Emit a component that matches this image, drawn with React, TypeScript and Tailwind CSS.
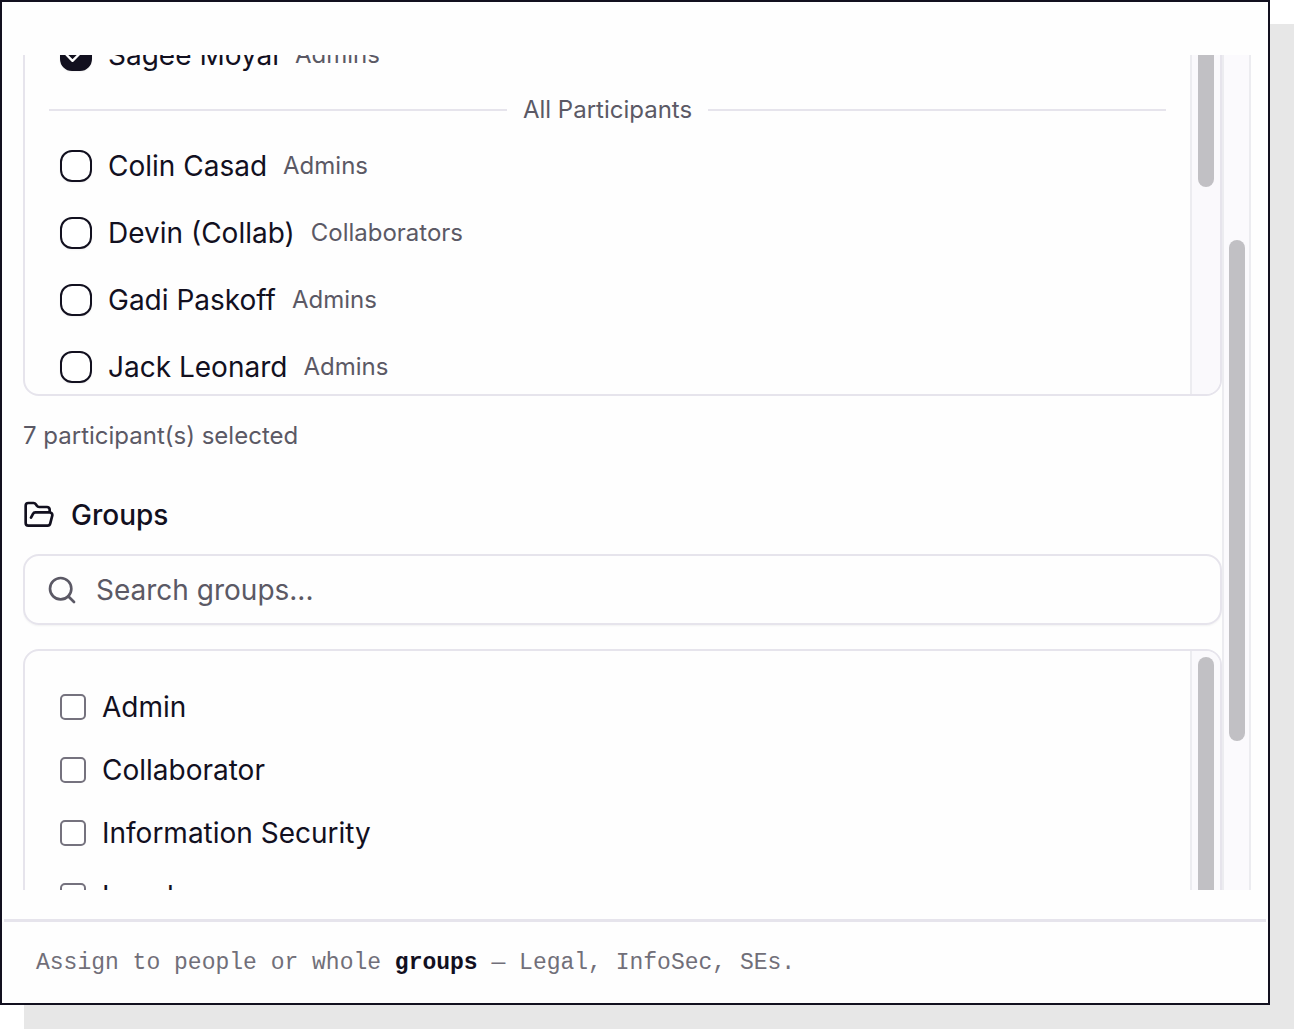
import React, { useState } from 'react';
import { Check, FolderOpen, Search } from 'lucide-react';

type Participant = {
  id: string;
  name: string;
  role: 'Admins' | 'Collaborators';
};

const selectedParticipants: Participant[] = [{ id: 'sagee', name: 'Sagee Moyal', role: 'Admins' }];

const allParticipants: Participant[] = [
  { id: 'colin', name: 'Colin Casad', role: 'Admins' },
  { id: 'devin', name: 'Devin (Collab)', role: 'Collaborators' },
  { id: 'gadi', name: 'Gadi Paskoff', role: 'Admins' },
  { id: 'jack', name: 'Jack Leonard', role: 'Admins' },
];

const groups = ['Admin', 'Collaborator', 'Information Security', 'Legal'];

const ParticipantRow: React.FC<{ participant: Participant; defaultChecked?: boolean }> = ({
  participant,
  defaultChecked = false,
}) => (
  <li className="flex h-[67px] shrink-0 items-center pl-[11px]">
    <span className="relative flex">
      <input
        id={participant.id}
        type="checkbox"
        defaultChecked={defaultChecked}
        className="peer size-8 appearance-none rounded-xl border-2 border-[#12101f] bg-white shadow-xs checked:bg-[#12101f]"
      />
      <Check className="pointer-events-none absolute inset-0.5 hidden size-7 text-white peer-checked:block" />
    </span>
    <label htmlFor={participant.id} className="flex items-center gap-4 pl-4 text-[28px] leading-10">
      {participant.name}
      <span className="text-2xl text-[#5b5965]">{participant.role}</span>
    </label>
  </li>
);

const App: React.FC = () => {
  const [query, setQuery] = useState('');
  const visibleGroups = groups.filter(g => g.toLowerCase().includes(query.toLowerCase()));

  return (
    <div className="bg-white pr-[25px] pb-[25px] font-['Inter',sans-serif] text-[#12101f]">
      <main className="border-2 border-[#12101f] bg-[#fefefe] shadow-[24px_24px_0_#e7e7e7]">
        <div className="mt-[53px] mr-[17px] ml-[21px] flex h-[835px] overflow-hidden">
          <div className="-mt-9 min-w-0 flex-1">
            <section className="flex h-[377px] overflow-hidden rounded-2xl border-2 border-[#e6e4ec]" aria-label="Participants">
              <div className="flex flex-1 flex-col overflow-hidden px-6">
                <ul>
                  {selectedParticipants.map(p => (
                    <ParticipantRow key={p.id} participant={p} defaultChecked />
                  ))}
                </ul>
                <div className="flex h-11 shrink-0 items-center gap-4 text-2xl text-[#5b5965]">
                  <span className="h-0.5 flex-1 bg-[#e6e4ec]" />
                  All Participants
                  <span className="h-0.5 flex-1 bg-[#e6e4ec]" />
                </div>
                <ul>
                  {allParticipants.map(p => (
                    <ParticipantRow key={p.id} participant={p} />
                  ))}
                </ul>
              </div>
              <div className="w-[30px] border-l-2 border-[#ececf0] bg-[#faf9fc] px-1.5 pt-1.5">
                <div className="h-40 w-4 rounded-full bg-[#c1c0c4]" />
              </div>
            </section>
            <p className="mt-6 text-2xl text-[#5b5965]">7 participant(s) selected</p>

            <h2 className="mt-[43px] flex items-center gap-4 text-[28px] leading-10 font-medium">
              <FolderOpen className="size-8" />
              Groups
            </h2>
            <div className="mt-[19px] flex h-[71px] items-center gap-[18px] rounded-2xl border-2 border-[#e6e4ec] pl-[21px] text-[#5b5965] shadow-xs">
              <Search className="size-8" />
              <input
                type="text"
                aria-label="Search groups"
                placeholder="Search groups..."
                value={query}
                onChange={e => setQuery(e.target.value)}
                className="h-10 min-w-0 flex-1 bg-transparent text-[28px] outline-none placeholder:text-[#5b5965]"
              />
            </div>
            <section className="mt-6 flex h-[375px] overflow-hidden rounded-2xl border-2 border-[#e6e4ec]" aria-label="Groups">
              <ul className="flex-1 pt-6 pl-[35px]">
                {visibleGroups.map(group => (
                  <li key={group} className="flex h-[63px] items-center">
                    <label className="flex items-center gap-4 text-[28px] leading-10">
                      <input
                        type="checkbox"
                        className="size-[26px] appearance-none rounded-[5px] border-2 border-[#75727e] bg-white checked:bg-[#12101f]"
                      />
                      {group}
                    </label>
                  </li>
                ))}
              </ul>
              <div className="w-[30px] border-l-2 border-[#ececf0] bg-[#faf9fc] px-1.5 pt-1.5">
                <div className="h-80 w-4 rounded-full bg-[#c1c0c4]" />
              </div>
            </section>
          </div>
          {/* Dialog scrollbar */}
          <div className="w-[29px] border-x-2 border-[#ececf0] bg-[#fbfafd] px-[5px] pt-[185px]">
            <div className="h-[501px] w-4 rounded-full bg-[#c1c0c4]" />
          </div>
        </div>
        <footer className="mx-0.5 mt-[29px] border-t-[3px] border-[#e6e4ec] px-8 pt-[25px] pb-6 font-['Liberation_Mono',monospace] text-[23px] leading-8 text-[#716f79]">
          Assign to people or whole <strong className="font-bold text-[#12101f]">groups</strong> — Legal, InfoSec, SEs.
        </footer>
      </main>
    </div>
  );
};

export default App;
